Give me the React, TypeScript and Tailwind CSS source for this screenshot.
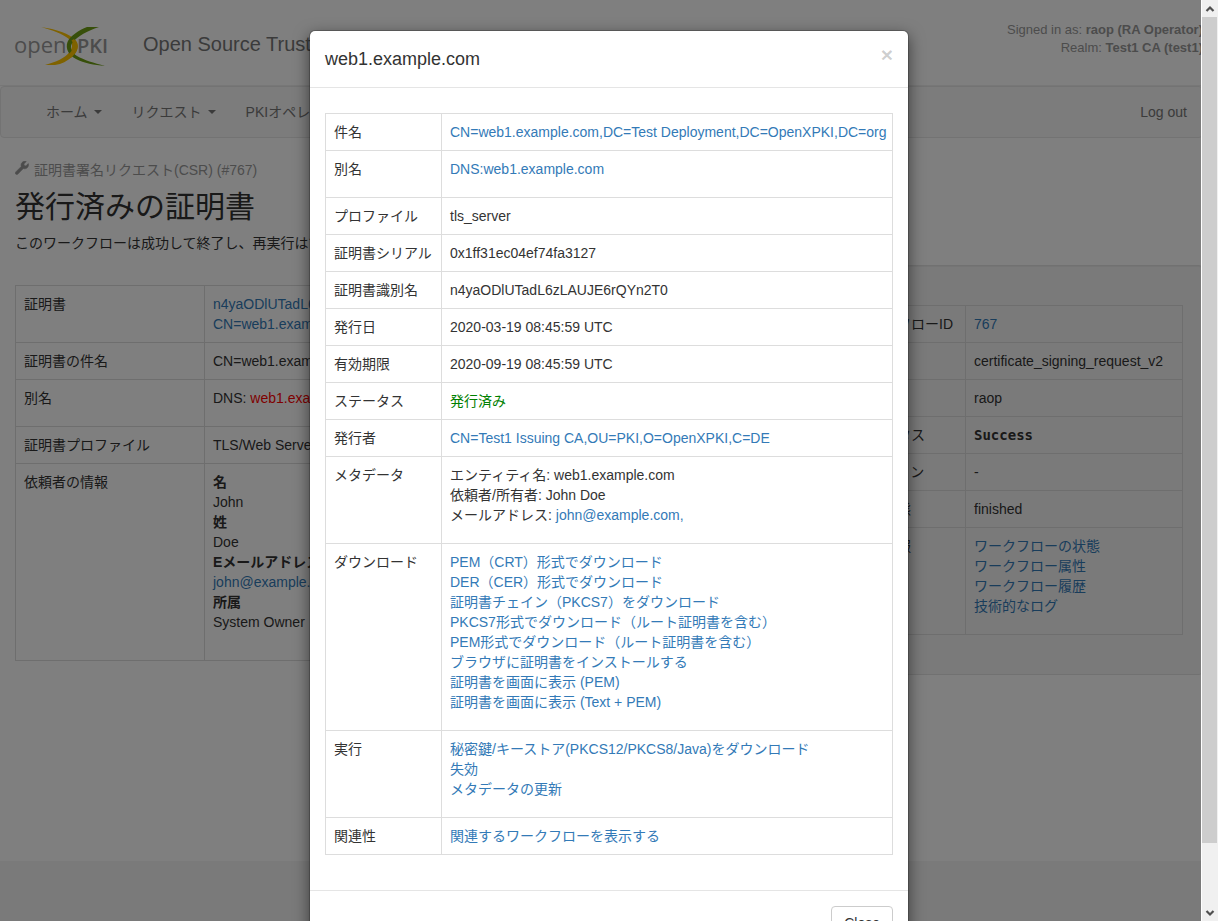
import type { ReactNode } from "react";

type Row = { label: string; value: ReactNode };

function Link({ children }: { children: ReactNode }) {
  return (
    <a href="#" className="text-[#337ab7] hover:underline">
      {children}
    </a>
  );
}

function LinkList({ items }: { items: string[] }) {
  return (
    <ul className="mb-2.5">
      {items.map((item) => (
        <li key={item}>
          <Link>{item}</Link>
        </li>
      ))}
    </ul>
  );
}

function DataTable({ rows, labelWidth }: { rows: Row[]; labelWidth: string }) {
  return (
    <table className="w-full border-collapse border border-[#ddd] text-left">
      <tbody>
        {rows.map((row) => (
          <tr key={row.label}>
            <th
              scope="row"
              className={`${labelWidth} border border-[#ddd] p-2 align-top font-normal whitespace-nowrap`}
            >
              {row.label}
            </th>
            <td className="border border-[#ddd] py-2 pr-1 pl-2 align-top">{row.value}</td>
          </tr>
        ))}
      </tbody>
    </table>
  );
}

function Logo() {
  return (
    <svg viewBox="10 19 100 50" className="h-[50px] w-[100px]" role="img" aria-label="OpenXPKI">
      <text x="14" y="53" fontSize="22" fontWeight="400" fill="#999" fontFamily="'Open Sans', sans-serif">
        open
      </text>
      <text x="77" y="53" fontSize="20" fontWeight="600" fill="#999" fontFamily="'Open Sans', sans-serif">
        PKI
      </text>
      <path d="M41 27 C56 29 70 34 75.500 40 C80 45 78 52 72 57 C67 61 62 64 55 65 L45 65 C56 62 65 58 69.500 52 C73 47 73 43 69 39 C63 34 52 30 41 27Z" fill="#ffc400" />
      <path d="M99 27 L87 27 C79 30 70 36 67.500 42 C65 49 69 55 76 59 C84 63 94 65 105 66 C94 63 84 60 77 56 C71 52 69 47 73 42 C78 36 87 31 99 27Z" fill="#6f9f14" />
      <path d="M74 39 C79.500 45 78 51 72 57 L67 59.300 L67 55.500 C74 50 75 45 71.500 40.500Z" fill="#ffc400" />
    </svg>
  );
}

function Wrench() {
  return (
    <svg viewBox="0 0 14 14" className="mb-1 h-3.5 w-3.5" aria-hidden="true">
      <path
        d="M13.3 2.6 L10.9 4.9 L9.2 4.5 L8.9 2.9 L11.2 .5 C9.700 .1 7.900 .5 6.900 1.700 C6 2.800 5.800 4.200 6.300 5.400 L.8 10.900 C.1 11.600 .1 12.500 .7 13.100 C1.300 13.700 2.200 13.700 2.900 13 L8.300 7.500 C9.500 8 11.100 7.800 12.200 6.800 C13.400 5.700 13.800 4.100 13.300 2.600Z"
        fill="#999"
        stroke="#999"
        strokeWidth="0.6"
      />
    </svg>
  );
}

function NavItem({ label }: { label: string }) {
  return (
    <li>
      <button type="button" className="flex items-center gap-1.5 px-[15px] whitespace-nowrap">
        {label}
        <span className="border-x-4 border-t-4 border-x-transparent border-t-[#777]" />
      </button>
    </li>
  );
}

const requestRows: Row[] = [
  {
    label: "証明書",
    value: (
      <>
        <Link>n4yaODlUTadL6zLAUJE6rQYn2T0</Link>
        <br />
        <Link>CN=web1.example.com,DC=Test Deployment,DC=OpenXPKI,DC=org</Link>
      </>
    ),
  },
  { label: "証明書の件名", value: "CN=web1.example.com,DC=Test Deployment,DC=OpenXPKI,DC=org" },
  {
    label: "別名",
    value: (
      <p className="mb-2.5">
        DNS: <span className="text-[#f00]">web1.example.com</span>
      </p>
    ),
  },
  { label: "証明書プロファイル", value: "TLS/Web Server" },
  {
    label: "依頼者の情報",
    value: (
      <dl className="mb-5">
        <dt className="font-bold">名</dt>
        <dd>John</dd>
        <dt className="font-bold">姓</dt>
        <dd>Doe</dd>
        <dt className="font-bold">Eメールアドレス</dt>
        <dd>
          <Link>john@example.com</Link>
        </dd>
        <dt className="font-bold">所属</dt>
        <dd>System Owner</dd>
      </dl>
    ),
  },
];

const workflowRows: Row[] = [
  { label: "ワークフローID", value: <Link>767</Link> },
  { label: "タイプ", value: "certificate_signing_request_v2" },
  { label: "作成者", value: "raop" },
  {
    label: "ステータス",
    value: <strong className="align-top font-['DejaVu_Sans_Mono',monospace]">Success</strong>,
  },
  { label: "アクション", value: "-" },
  { label: "処理状態", value: "finished" },
  {
    label: "追加情報",
    value: (
      <LinkList
        items={["ワークフローの状態", "ワークフロー属性", "ワークフロー履歴", "技術的なログ"]}
      />
    ),
  },
];

const certificateRows: Row[] = [
  {
    label: "件名",
    value: (
      <span className="whitespace-nowrap">
        <Link>CN=web1.example.com,DC=Test Deployment,DC=OpenXPKI,DC=org</Link>
      </span>
    ),
  },
  { label: "別名", value: <LinkList items={["DNS:web1.example.com"]} /> },
  { label: "プロファイル", value: "tls_server" },
  { label: "証明書シリアル", value: "0x1ff31ec04ef74fa3127" },
  { label: "証明書識別名", value: "n4yaODlUTadL6zLAUJE6rQYn2T0" },
  { label: "発行日", value: "2020-03-19 08:45:59 UTC" },
  { label: "有効期限", value: "2020-09-19 08:45:59 UTC" },
  { label: "ステータス", value: <span className="text-[#008000]">発行済み</span> },
  { label: "発行者", value: <Link>CN=Test1 Issuing CA,OU=PKI,O=OpenXPKI,C=DE</Link> },
  {
    label: "メタデータ",
    value: (
      <ul className="mb-2.5">
        <li>エンティティ名: web1.example.com</li>
        <li>依頼者/所有者: John Doe</li>
        <li>
          メールアドレス: <Link>john@example.com,</Link>
        </li>
      </ul>
    ),
  },
  {
    label: "ダウンロード",
    value: (
      <LinkList
        items={[
          "PEM（CRT）形式でダウンロード",
          "DER（CER）形式でダウンロード",
          "証明書チェイン（PKCS7）をダウンロード",
          "PKCS7形式でダウンロード（ルート証明書を含む）",
          "PEM形式でダウンロード（ルート証明書を含む）",
          "ブラウザに証明書をインストールする",
          "証明書を画面に表示 (PEM)",
          "証明書を画面に表示 (Text + PEM)",
        ]}
      />
    ),
  },
  {
    label: "実行",
    value: (
      <LinkList
        items={[
          "秘密鍵/キーストア(PKCS12/PKCS8/Java)をダウンロード",
          "失効",
          "メタデータの更新",
        ]}
      />
    ),
  },
  { label: "関連性", value: <Link>関連するワークフローを表示する</Link> },
];

function Page() {
  return (
    <div className="-mr-0.5 flex h-full flex-col">
      <header className="flex h-[86px] shrink-0 items-center border-b border-[#eee] pt-0.5 pl-2.5">
        <Logo />
        <p className="ml-[33px] text-xl whitespace-nowrap text-[#777]">
          Open Source Trustcenter
        </p>
        <div className="mb-2.5 ml-auto text-right text-[13px] leading-[18px] whitespace-nowrap text-[#999]">
          <p>
            Signed in as: <b>raop (RA Operator)</b>
          </p>
          <p>
            Realm: <b>Test1 CA (test1)</b>
          </p>
        </div>
      </header>

      <nav className="flex h-[52px] shrink-0 items-center rounded border border-[#e7e7e7] bg-[#f8f8f8] pr-[15px] pl-[30px] text-[#777]">
        <ul className="flex">
          <NavItem label="ホーム" />
          <NavItem label="リクエスト" />
          <NavItem label="PKIオペレーション" />
        </ul>
        <a href="#" className="ml-auto">
          Log out
        </a>
      </nav>

      <main className="flex pt-[22px]">
        <section className="min-w-0 flex-1 pr-[30px] pl-[15px]">
          <p className="flex items-center gap-[5px] text-[#999]">
            <Wrench />
            証明書署名リクエスト(CSR) (#767)
          </p>
          <h1 className="my-2.5 text-3xl leading-[33px]">発行済みの証明書</h1>
          <p>このワークフローは成功して終了し、再実行はできません。</p>
          <div className="mt-8">
            <DataTable rows={requestRows} labelWidth="w-[189px]" />
          </div>
        </section>
        <aside className="mt-[105px] w-[377px] self-start rounded border border-[#e3e3e3] bg-[#f5f5f5] px-[19px] py-[39px] shadow-[inset_0_1px_1px_rgba(0,0,0,0.05)]">
          <DataTable rows={workflowRows} labelWidth="w-[119px]" />
        </aside>
      </main>

      <footer className="mt-auto h-[60px] shrink-0 bg-[#f5f5f5]" />
    </div>
  );
}

function CertificateDialog() {
  return (
    <div
      role="dialog"
      aria-modal="true"
      aria-labelledby="dialog-title"
      className="mx-auto mt-[30px] w-[600px] max-w-full rounded-md border border-black/20 bg-white bg-clip-padding shadow-[0_5px_15px_rgba(0,0,0,0.5)]"
    >
      <div className="flex items-start justify-between border-b border-[#e5e5e5] p-[15px]">
        <h2 id="dialog-title" className="text-lg leading-[26px]">
          web1.example.com
        </h2>
        <button
          type="button"
          aria-label="閉じる"
          className="text-[21px] leading-[18px] font-bold text-black/20"
        >
          ×
        </button>
      </div>
      <div className="px-[15px] pt-[25px] pb-[35px]">
        <DataTable rows={certificateRows} labelWidth="w-[116px]" />
      </div>
      <div className="border-t border-[#e5e5e5] p-[15px] text-right">
        <button type="button" className="rounded border border-[#ccc] bg-white px-3 py-1.5">
          Close
        </button>
      </div>
    </div>
  );
}

function ScrollTrack() {
  return (
    <div
      aria-hidden="true"
      className="flex w-[17px] shrink-0 flex-col items-center border-l border-white bg-[#f0f0f0]"
    >
      <svg viewBox="0 0 16 17" className="h-[17px] w-4">
        <path d="M4.500 11 L8 7.500 L11.500 11" fill="none" stroke="#505050" strokeWidth="2.200" />
      </svg>
      <div className="mr-px w-[15px] flex-1 bg-[#cdcdcd]" />
      <svg viewBox="0 0 16 17" className="mt-[61px] h-[17px] w-4">
        <path d="M4.500 7 L8 10.500 L11.500 7" fill="none" stroke="#505050" strokeWidth="2.200" />
      </svg>
    </div>
  );
}

export default function App() {
  return (
    <div className="flex h-screen overflow-hidden bg-white font-['Liberation_Sans','Noto_Sans_CJK_JP',sans-serif] text-sm leading-5 text-[#333]">
      <div className="relative min-w-0 flex-1 overflow-hidden">
        <Page />
        <div className="absolute inset-0 overflow-hidden bg-black/50 pl-[17px]">
          <CertificateDialog />
        </div>
      </div>
      <ScrollTrack />
    </div>
  );
}
